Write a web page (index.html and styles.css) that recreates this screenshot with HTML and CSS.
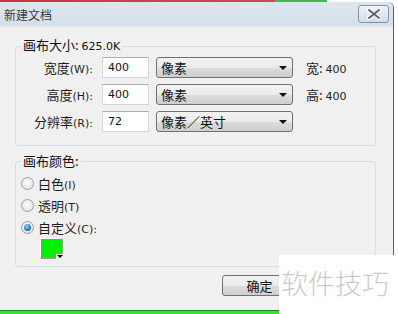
FILE: index.html
```html
<!DOCTYPE html>
<html lang="zh-CN">
  <head>
    <meta charset="UTF-8" />
    <title>新建文档</title>
    <link rel="stylesheet" href="styles.css">
  </head>
  <body>
    <div class="strip"></div>

    <!-- dialog window -->
    <div class="window">
      <div class="titlebar">
        <span class="title">新建文档</span>
        <button class="close" type="button">
          <svg width="16" height="12" viewBox="0 0 16 12">
            <path d="M3 2 L13 10 M13 2 L3 10" stroke="#fff" stroke-width="4" stroke-linecap="round" />
            <path d="M3 2 L13 10 M13 2 L3 10" stroke="#5a6370" stroke-width="2" stroke-linecap="round" />
          </svg>
        </button>
      </div>

      <div class="client">
        <fieldset class="group size">
          <legend>画布大小: <span class="num">625.0K</span></legend>
          <div class="row">
            <label class="lbl">宽度<span class="num">(W):</span></label>
            <input class="field num" type="text" value="400" />
            <div class="select">像素<span class="arrow"></span></div>
            <span class="info">宽: <span class="num">400</span></span>
          </div>
          <div class="row">
            <label class="lbl">高度<span class="num">(H):</span></label>
            <input class="field num" type="text" value="400" />
            <div class="select">像素<span class="arrow"></span></div>
            <span class="info">高: <span class="num">400</span></span>
          </div>
          <div class="row">
            <label class="lbl">分辨率<span class="num">(R):</span></label>
            <input class="field num" type="text" value="72" />
            <div class="select">像素／英寸<span class="arrow"></span></div>
          </div>
        </fieldset>

        <fieldset class="group color">
          <legend>画布颜色:</legend>
          <label class="radio"><span class="dot"></span><span>白色<span class="num">(I)</span></span></label>
          <label class="radio"><span class="dot"></span><span>透明<span class="num">(T)</span></span></label>
          <label class="radio"><span class="dot on"></span><span>自定义<span class="num">(C):</span></span></label>
          <div class="swatch"><span class="tri"></span></div>
        </fieldset>

        <div class="buttons">
          <button class="btn" type="button">确定</button>
        </div>
      </div>
    </div>

    <div class="taskbar"></div>

    <div class="watermark">软件技巧</div>
  </body>
</html>
```

FILE: styles.css
```css
body {
  margin: 0;
  width: 398px;
  height: 314px;
  overflow: hidden;
  position: relative;
  background: #fff;
  font-family: "Noto Sans CJK SC", sans-serif;
  font-size: 13px;
  color: #1e1e1e;
}
.num {
  font-family: "DejaVu Sans", sans-serif;
  font-size: 11px;
}
.strip {
  height: 2px;
  width: 327px;
  background: linear-gradient(to right, #c9363a 0, #d04a4a 275px, #3fbf3f 275px, #3fbf3f 327px);
}
.window {
  width: 393px;
  height: 308px;
  border-right: 1px solid #5b5f66;
  border-top-right-radius: 6px;
  overflow: hidden;
  background: #f0f0f0;
}
.titlebar {
  height: 24px;
  display: flex;
  align-items: center;
  justify-content: space-between;
  padding: 0 4px 0 4px;
  background: linear-gradient(#dde6ef, #d4dfea);
  border-bottom: 1px solid #e4eaf0;
}
.title {
  color: #3a3a3a;
  font-size: 12px;
}
.close {
  width: 31px;
  height: 18px;
  padding: 0;
  display: flex;
  align-items: center;
  justify-content: center;
  border: 1px solid #8494a8;
  border-radius: 3px;
  background: linear-gradient(#eef2f6, #d3dce6);
}
.client {
  padding: 10px 17px 0 15px;
}
.group {
  margin: 0;
  border: 1px solid #d5dde3;
  border-radius: 3px;
  padding: 2px 0 13px 0;
}
.group legend {
  line-height: 16px;
  padding: 0 2px;
  margin-left: 5px;
  color: #111;
}
.row {
  display: flex;
  align-items: center;
  height: 21px;
  margin-bottom: 6px;
}
.row:last-child {
  margin-bottom: 0;
}
.lbl {
  width: 77px;
  text-align: right;
  margin-right: 9px;
}
.field {
  box-sizing: border-box;
  width: 47px;
  height: 21px;
  border: 1px solid #d3d6dc;
  border-top-color: #abadb3;
  padding: 0 5px;
  margin: 0 7px 0 0;
  color: #111;
  background: #fff;
}
.select {
  box-sizing: border-box;
  width: 137px;
  height: 21px;
  border: 1px solid #707070;
  border-radius: 3px;
  background: linear-gradient(#f2f2f2 0, #ebebeb 50%, #dddddd 51%, #cfcfcf 100%);
  padding-left: 4px;
  display: flex;
  align-items: center;
  position: relative;
  color: #111;
}
.arrow {
  position: absolute;
  right: 5px;
  top: 8px;
  border-left: 4px solid transparent;
  border-right: 4px solid transparent;
  border-top: 4px solid #111;
}
.info {
  margin-left: 13px;
}
.color {
  margin-top: 7px;
  padding: 3px 0 7px 0;
}
.radio {
  display: flex;
  align-items: center;
  height: 22px;
  padding-left: 5px;
}
.dot {
  box-sizing: border-box;
  width: 13px;
  height: 13px;
  border-radius: 50%;
  border: 1px solid #9a9ea4;
  background: radial-gradient(circle at 50% 40%, #fdfdfd, #dcdcdc);
  margin-right: 4px;
  position: relative;
}
.dot.on::after {
  content: "";
  position: absolute;
  left: 2px;
  top: 2px;
  width: 7px;
  height: 7px;
  border-radius: 50%;
  background: radial-gradient(circle at 40% 35%, #8fd2ff, #1a6fb0 70%, #0d4f85);
}
.swatch {
  position: relative;
  box-sizing: border-box;
  width: 23px;
  height: 21px;
  margin: 0 0 0 24px;
  border: 1px solid #fff;
  border-right-color: #a0a0a0;
  border-bottom-color: #a0a0a0;
  background: #00f000;
}
.tri {
  position: absolute;
  right: -1px;
  bottom: -1px;
  width: 7px;
  height: 5px;
  background: #f0f0f0;
}
.tri::after {
  content: "";
  position: absolute;
  left: 1px;
  top: 1px;
  border-left: 3px solid transparent;
  border-right: 3px solid transparent;
  border-top: 3px solid #000;
}
.buttons {
  display: flex;
  justify-content: flex-end;
  margin-top: 8px;
  padding-right: 79px;
}
.btn {
  width: 75px;
  height: 21px;
  padding: 0;
  border: 1px solid #707070;
  border-radius: 3px;
  background: linear-gradient(#f2f2f2 0, #ebebeb 50%, #dddddd 51%, #cfcfcf 100%);
  font-family: "Noto Sans CJK SC", sans-serif;
  font-size: 13px;
  color: #111;
}
.taskbar {
  width: 279px;
  height: 3px;
  border-top: 1px solid #168a16;
  background: #33e033;
}
.watermark {
  position: absolute;
  left: 279px;
  top: 255px;
  width: 119px;
  height: 59px;
  background: #fff;
  color: #cbcbcb;
  font-size: 27px;
  font-weight: 300;
  line-height: 56px;
  padding-left: 2px;
  box-sizing: border-box;
}
```
